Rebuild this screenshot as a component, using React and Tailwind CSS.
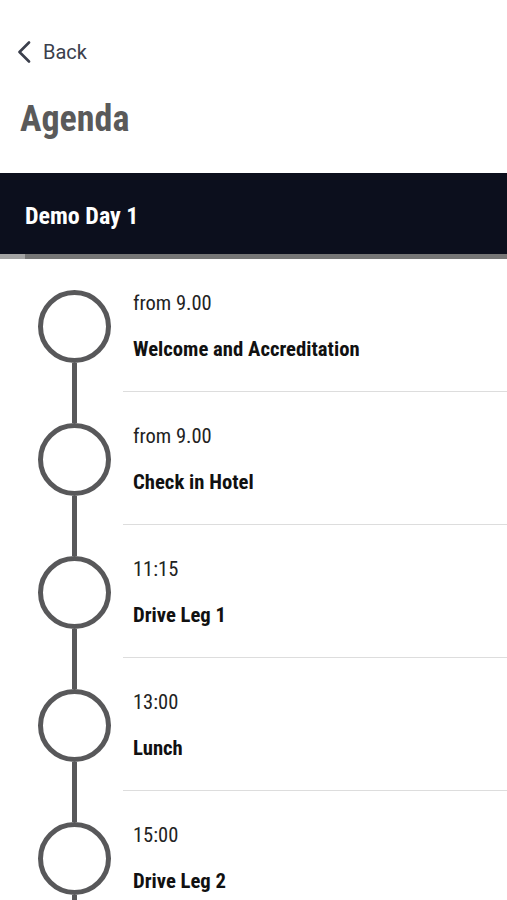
const ITEMS = [
  { time: 'from 9.00', title: 'Welcome and Accreditation' },
  { time: 'from 9.00', title: 'Check in Hotel' },
  { time: '11:15', title: 'Drive Leg 1' },
  { time: '13:00', title: 'Lunch' },
  { time: '15:00', title: 'Drive Leg 2' },
]

const font = { fontFamily: '"Roboto Condensed", Roboto, "Liberation Sans", sans-serif' }

function AgendaRow({ item, first }) {
  return (
    <div className="flex h-[133px]">
      <div className="relative w-[123px] shrink-0">
        {!first && <div className="absolute left-[72px] top-0 h-[31px] w-[5px] bg-[#58585a]" />}
        <div className="absolute left-[38px] top-[31px] h-[73px] w-[73px] rounded-full border-[5px] border-[#58585a]" />
        <div className="absolute left-[72px] top-[104px] h-[29px] w-[5px] bg-[#58585a]" />
      </div>
      <div className="flex-1 border-b border-[#dddddd] pl-[10px] pt-[34px]">
        <div className="text-[20.5px] leading-none text-[#222]">{item.time}</div>
        <div className="mt-[25px] text-[20.7px] font-bold leading-none text-[#111]">{item.title}</div>
      </div>
    </div>
  )
}

export default function App() {
  return (
    <div className="h-[900px] w-[507px] overflow-hidden bg-white" style={{ fontFamily: 'Roboto, "Liberation Sans", sans-serif' }}>
      <div className="flex h-[22px] items-center gap-[12px] pl-[17px] mt-[41px]">
        <svg width="14" height="22" viewBox="0 0 14 22" fill="none">
          <path d="M12 1.5 L2.5 11 L12 20.5" stroke="#3b3f4c" strokeWidth="2.6" strokeLinecap="round" strokeLinejoin="round" />
        </svg>
        <span className="text-[20px] leading-none text-[#3b3f4c]">Back</span>
      </div>
      <h1 className="mt-[38px] pl-[20px] text-[36px] font-bold leading-none text-[#5a5a5a]" style={font}>
        Agenda
      </h1>
      <div className="mt-[36px] flex h-[81px] items-center bg-[#0c0f1d] pl-[25px] pt-[5px]">
        <span className="text-[24px] font-bold leading-none text-white" style={font}>Demo Day 1</span>
      </div>
      <div className="flex h-[5px]">
        <div className="w-[25px] bg-[#a3a3a3]" />
        <div className="flex-1 bg-[#767676]" />
      </div>
      <div style={font}>
        {ITEMS.map((item, i) => (
          <AgendaRow key={i} item={item} first={i === 0} />
        ))}
      </div>
    </div>
  )
}
